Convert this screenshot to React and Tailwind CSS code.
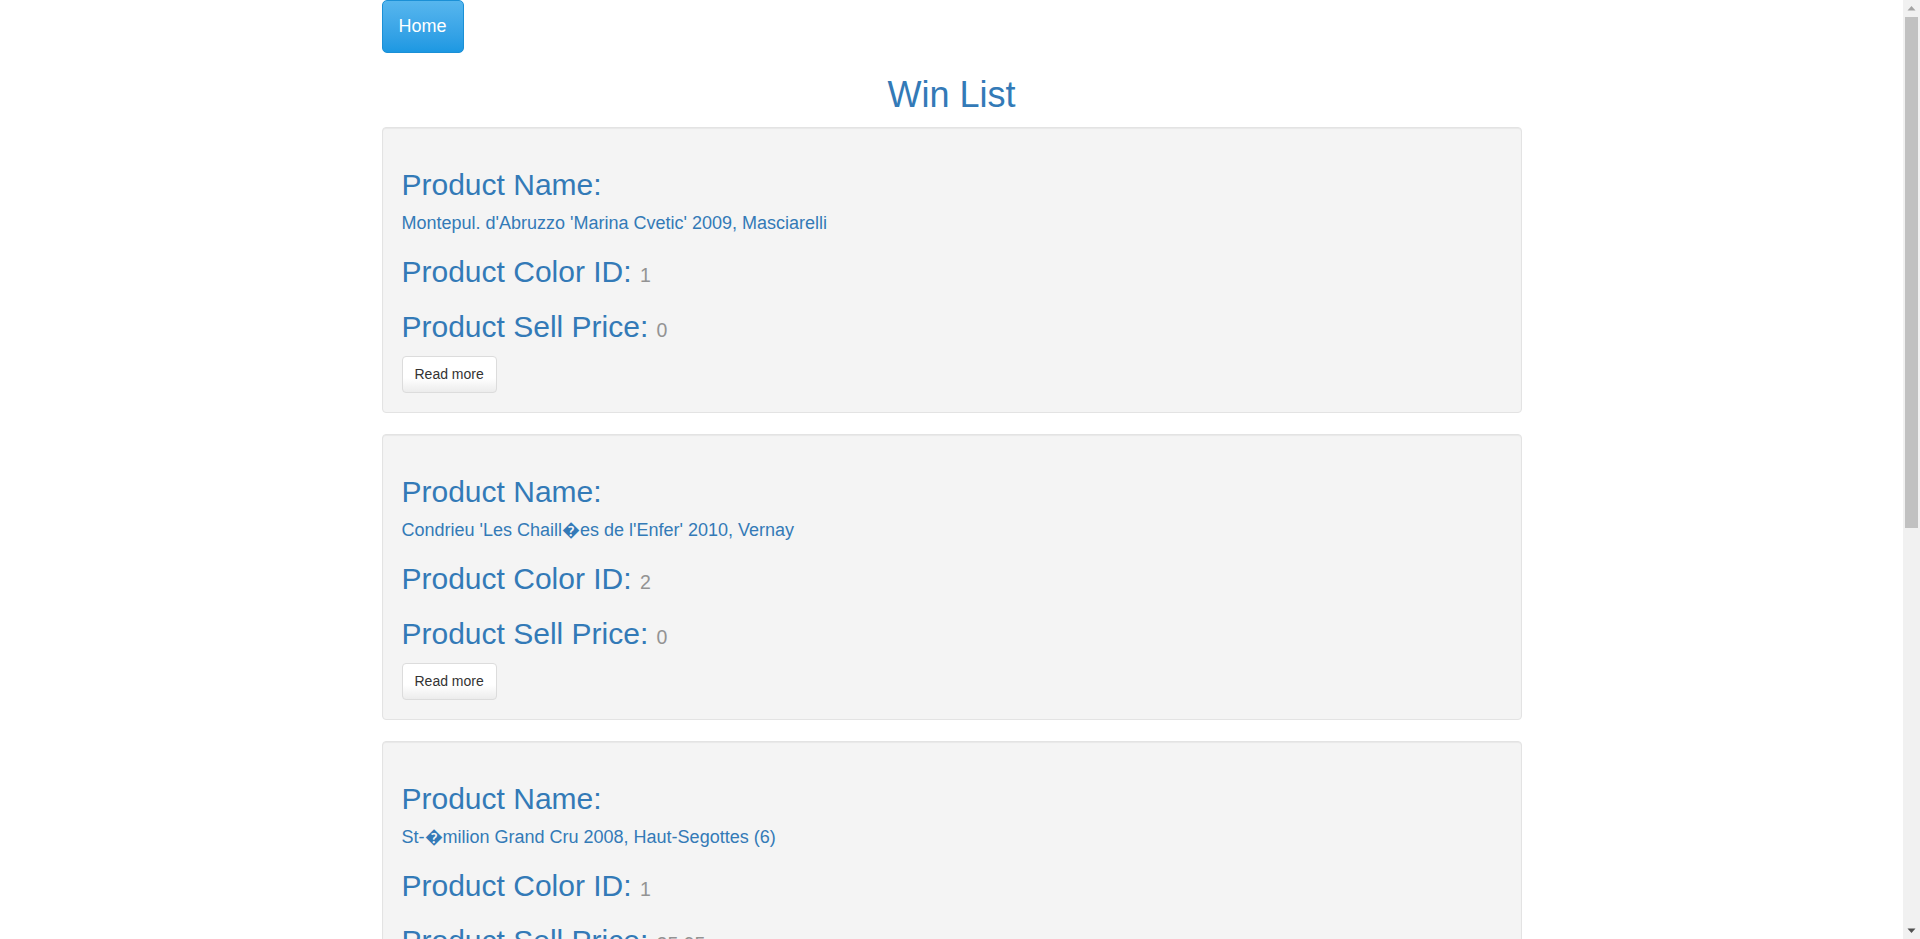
const wines = [
  { name: "Montepul. d'Abruzzo 'Marina Cvetic' 2009, Masciarelli", color: 1, price: '0' },
  { name: "Condrieu 'Les Chaill\uFFFDes de l'Enfer' 2010, Vernay", color: 2, price: '0' },
  { name: 'St-\uFFFDmilion Grand Cru 2008, Haut-Segottes (6)', color: 1, price: '25.95' },
  { name: "Chianti Classico 'Riserva' 2007, Castello di Ama", color: 1, price: '0' },
  { name: "Sancerre 'Les Monts Damn\uFFFDs' 2011, Cotat", color: 2, price: '0' },
]

function WineCard({ wine }) {
  return (
    <div className="mb-[21px] rounded-[4px] border border-[#e3e3e3] bg-[#f4f4f4] p-[19px] shadow-[inset_0_1px_1px_rgba(0,0,0,0.05)]">
      <h2 className="mt-[21px] text-[30px] leading-[33px] text-[#337ab7]">Product Name:</h2>
      <p className="mt-[11px] text-[18px] leading-[22px] text-[#337ab7]">{wine.name}</p>
      <h2 className="mt-[21px] text-[30px] leading-[33px] text-[#337ab7]">
        Product Color ID: <small className="text-[19.5px] leading-none text-[#939393]">{wine.color}</small>
      </h2>
      <h2 className="mt-[22px] text-[30px] leading-[33px] text-[#337ab7]">
        Product Sell Price: <small className="text-[19.5px] leading-none text-[#939393]">{wine.price}</small>
      </h2>
      <button className="mt-[13px] h-[37px] rounded-[4px] border border-[#dcdcdc] bg-linear-to-b from-white from-60% to-[#ececec] px-[12px] text-[14px] text-[#333]">
        Read more
      </button>
    </div>
  )
}

function Scrollbar() {
  return (
    <div className="fixed top-0 right-0 h-screen w-[17px] bg-[#f1f1f1]">
      <svg className="absolute top-[5px] left-[4px]" width="9" height="6" viewBox="0 0 9 6">
        <path d="M0.5 5.5 L4.5 1 L8.5 5.5 Z" fill="#a3a3a3" />
      </svg>
      <div className="absolute top-[17px] left-[2px] right-[2px] h-[511px] bg-[#c1c1c1]" />
      <svg className="absolute bottom-[5px] left-[4px]" width="9" height="6" viewBox="0 0 9 6">
        <path d="M0.5 0.5 L8.5 0.5 L4.5 5 Z" fill="#505050" />
      </svg>
    </div>
  )
}

export default function App() {
  return (
    <div className="min-h-screen bg-white pr-[17px] font-['Liberation_Sans','Helvetica_Neue',Arial,sans-serif]">
      <div className="mx-auto w-[1140px]">
        <button className="h-[53px] w-[82px] rounded-[5px] border border-[#1b90d6] bg-linear-to-b from-[#56b6ee] to-[#1c98e2] text-[18px] text-white">
          Home
        </button>
        <h1 className="mt-[22px] mb-[12px] text-center text-[36px] leading-[40px] text-[#337ab7]">Win List</h1>
        {wines.map((w, i) => (
          <WineCard key={i} wine={w} />
        ))}
      </div>
      <Scrollbar />
    </div>
  )
}
